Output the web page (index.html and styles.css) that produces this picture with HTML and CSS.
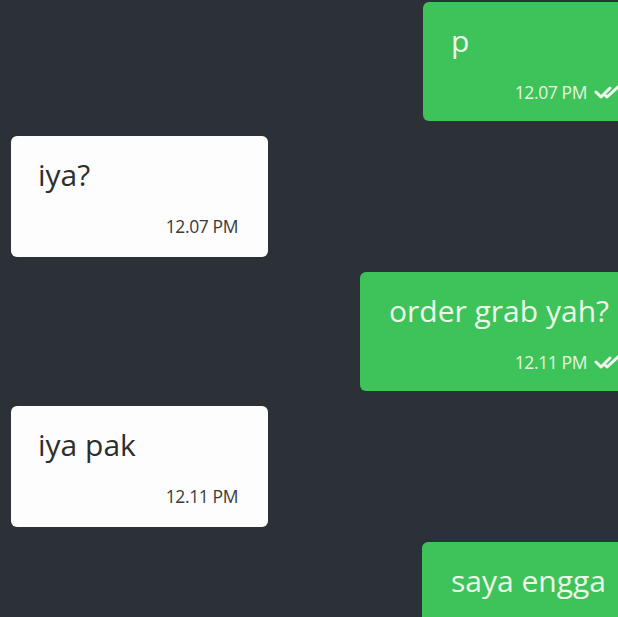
FILE: index.html
```html
<!DOCTYPE html>
<html lang="id">
<head>
  <meta charset="UTF-8" />
  <meta name="viewport" content="width=device-width, initial-scale=1.0" />
  <title>Chat</title>
  <link rel="stylesheet" href="styles.css">
</head>
<body>
  <div class="chat">
    <div class="bubble out b1">
      <div class="text">p</div>
      <div class="meta">
        <span class="time">12.07 PM</span>
        <svg class="ticks" width="30" height="16" viewBox="0 0 30 16"><path d="M2 8 L7 13 L16 4" /><path d="M11 11 L13 13 L25 2" /></svg>
      </div>
    </div>

    <div class="bubble in">
      <div class="text">iya?</div>
      <div class="meta"><span class="time">12.07 PM</span></div>
    </div>

    <div class="bubble out b3">
      <div class="text">order grab yah?</div>
      <div class="meta">
        <span class="time">12.11 PM</span>
        <svg class="ticks" width="30" height="16" viewBox="0 0 30 16"><path d="M2 8 L7 13 L16 4" /><path d="M11 11 L13 13 L25 2" /></svg>
      </div>
    </div>

    <div class="bubble in">
      <div class="text">iya pak</div>
      <div class="meta"><span class="time">12.11 PM</span></div>
    </div>

    <div class="bubble out b5">
      <div class="text">saya engga</div>
    </div>
  </div>
</body>
</html>
```

FILE: styles.css
```css
body {
  margin: 0;
  padding: 0;
  background: #2b3137;
  font-family: "Open Sans", "Noto Sans", sans-serif;
  overflow: hidden;
  height: 617px;
}
.chat {
  display: flex;
  flex-direction: column;
  gap: 15px;
  padding-top: 2px;
}
.bubble {
  border-radius: 6px;
  padding: 18px 30px 19px 27px;
  box-sizing: border-box;
  height: 120px;
}
.bubble .text {
  font-size: 30px;
  line-height: 42px;
}
.bubble .meta {
  display: flex;
  justify-content: flex-end;
  align-items: center;
  margin-top: 20px;
  height: 20px;
}
.time {
  font-size: 17.5px;
  letter-spacing: -0.4px;
}
.in {
  align-self: flex-start;
  margin-left: 11px;
  width: 257px;
  height: 121px;
  background: #fdfdfd;
  color: #2e2e2e;
}
.in .time {
  color: #3a3a3a;
}
.out {
  align-self: flex-end;
  margin-right: -14px;
  height: 119px;
  background: #3dc35a;
  color: #eef8e8;
  padding-right: 8px;
}
.out .time {
  color: #e6f5df;
}
.b1 {
  width: 209px;
  padding-left: 28px;
}
.b3 {
  width: 272px;
  padding-left: 29px;
}
.b5 {
  width: 210px;
  padding-left: 29px;
}
.ticks {
  margin-left: 7px;
  fill: none;
  stroke: #f2faef;
  stroke-width: 3;
  stroke-linecap: round;
  stroke-linejoin: round;
}
```
